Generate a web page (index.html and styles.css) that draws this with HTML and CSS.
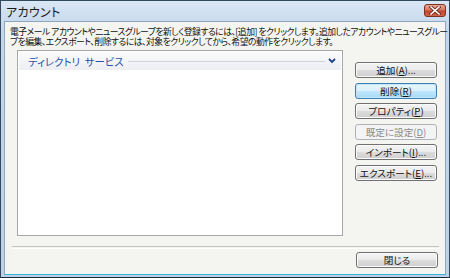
FILE: index.html
```html
<!DOCTYPE html>
<html>
<head>
    <meta charset="UTF-8">
    <title>アカウント</title>
    <link rel="stylesheet" href="styles.css">
</head>
<body>
    <div class="window">
        <div class="titlebar">
            <span class="title">アカウント</span>
            <button class="close" title="閉じる">
                <svg width="12" height="9" viewBox="0 0 12 9">
                    <path d="M2 1 L10 8 M10 1 L2 8" stroke="#6b2a1c" stroke-width="3.2" stroke-linecap="square"/>
                    <path d="M2 1 L10 8 M10 1 L2 8" stroke="#ffffff" stroke-width="1.6" stroke-linecap="square"/>
                </svg>
            </button>
        </div>

        <div class="client">
            <p class="intro">
                <span class="line">電子メール アカウントやニュースグループを新しく登録するには、[追加] をクリックします。追加したアカウントやニュースグルー</span>
                <span class="line">プを編集、エクスポート、削除するには、対象をクリックしてから、希望の動作をクリックします。</span>
            </p>

            <div class="main">
                <div class="list">
                    <div class="group-head">
                        <span class="group-name">ディレクトリ&nbsp; サービス</span>
                        <span class="rule"></span>
                        <svg class="chevron" width="8" height="6" viewBox="0 0 8 6">
                            <path d="M1 1 L4 4 L7 1" fill="none" stroke="#1f3f8f" stroke-width="1.8"/>
                        </svg>
                    </div>
                </div>

                <div class="actions">
                    <button class="btn">追加(<u>A</u>)...</button>
                    <button class="btn default">削除(<u>R</u>)</button>
                    <button class="btn">プロパティ(<u>P</u>)</button>
                    <button class="btn" disabled>既定に設定(<u>D</u>)</button>
                    <button class="btn">インポート(<u>I</u>)...</button>
                    <button class="btn">エクスポート(<u>E</u>)...</button>
                </div>
            </div>

            <div class="separator"></div>

            <div class="footer">
                <button class="btn">閉じる</button>
            </div>
        </div>
    </div>
</body>
</html>
```

FILE: styles.css
```css
body {
    margin: 0;
    font-family: "Noto Sans CJK JP", "Noto Sans", sans-serif;
    font-feature-settings: "palt";
    background: #ffffff;
}

.window {
    width: 450px;
    height: 278px;
    box-sizing: border-box;
    border: 1px solid #34495e;
    border-bottom-color: #1d2a36;
    background: linear-gradient(#d9e6f4, #c3d6ec 30px, #bcd1e8);
    padding: 0 3px 2px 3px;
    display: flex;
    flex-direction: column;
}

.titlebar {
    height: 20px;
    display: flex;
    align-items: center;
    justify-content: space-between;
    padding: 0 0 0 2px;
}

.title {
    font-size: 12px;
    color: #1a1a1a;
    letter-spacing: 0.3px;
}

.close {
    width: 22px;
    height: 13px;
    margin-top: -2px;
    padding: 0;
    border: 1px solid #7a3224;
    border-radius: 3px;
    background: linear-gradient(#e8a896, #d8765f 45%, #c4432b 55%, #d0634a);
    display: flex;
    align-items: center;
    justify-content: center;
}

.client {
    flex: 1;
    background: #f4f5f0;
    border: 1px solid #8fa6bf;
    border-bottom: 1px solid #33b3d8;
    padding: 5px 0 0 5px;
    display: flex;
    flex-direction: column;
}

.intro {
    margin: 0;
    font-size: 8.8px;
    line-height: 10px;
    letter-spacing: -0.5px;
    color: #111111;
}

.line {
    display: block;
    white-space: nowrap;
}

.main {
    display: flex;
    margin-top: 3px;
    height: 186px;
}

.list {
    width: 324px;
    margin-left: 7px;
    border: 1px solid #a7a7a7;
    background: #ffffff;
}

.group-head {
    height: 18px;
    margin: 1px;
    display: flex;
    align-items: center;
    padding: 0 5px 0 9px;
    background: linear-gradient(#fbfbfc, #eceef2);
}

.group-name {
    font-size: 10.4px;
    color: #2a4ea6;
    white-space: nowrap;
}

.rule {
    flex: 1;
    height: 1px;
    margin: 0 3px 0 4px;
    background: #ccd1dc;
}

.actions {
    display: flex;
    flex-direction: column;
    gap: 4.6px;
    padding-top: 12px;
    margin-left: 12px;
}

.btn {
    width: 82px;
    height: 16px;
    padding: 0;
    font-family: "Noto Sans CJK JP", sans-serif;
    font-feature-settings: "palt";
    font-size: 9.6px;
    line-height: 14px;
    color: #111111;
    border: 1px solid #707070;
    border-radius: 3px;
    background: linear-gradient(#f4f4f4, #ebebeb 48%, #dcdcdc 52%, #cfcfcf);
    box-shadow: inset 0 0 0 1px #fbfbfb;
}

.btn u {
    text-underline-offset: 1px;
}

.btn.default {
    border-color: #3c7fb1;
    background: linear-gradient(#eaf6fd, #d9f0fc 48%, #bee6fd 52%, #a7d9f5);
    box-shadow: inset 0 0 0 1px #c4e5f6;
}

.btn:disabled {
    color: #8a8a8a;
    border-color: #adb2b5;
    background: #f4f4f4;
    box-shadow: none;
}

.separator {
    margin: 10px 6px 0 2px;
    height: 1px;
    border-top: 1px solid #c3c3c3;
    border-bottom: 1px solid #ffffff;
}

.footer {
    display: flex;
    justify-content: flex-end;
    padding: 3px 7px 0 0;
}
```
